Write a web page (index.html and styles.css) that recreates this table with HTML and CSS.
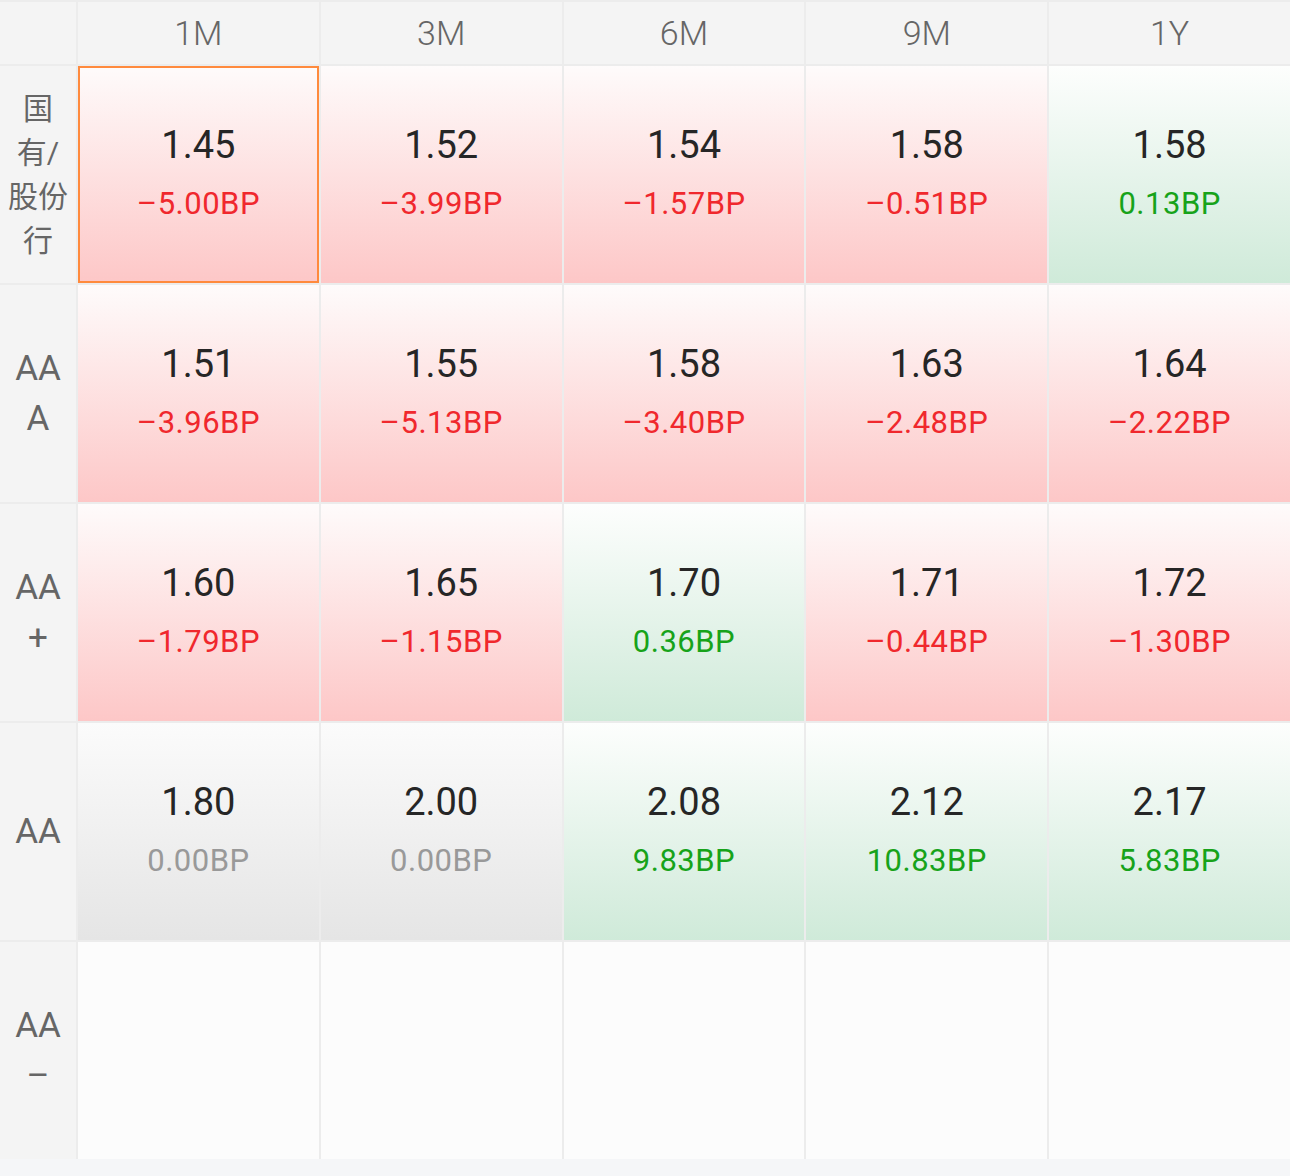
FILE: index.html
```html
<!DOCTYPE html>
<html lang="zh-CN">
<head>
    <meta charset="UTF-8">
    <meta name="viewport" content="width=device-width, initial-scale=1.0">
    <title>同业存单收益率</title>
    <link rel="stylesheet" href="styles.css">
</head>
<body>

    <section class="rate-grid">
        <!-- header row -->
        <div class="corner"></div>
        <div class="col-head">1M</div>
        <div class="col-head">3M</div>
        <div class="col-head">6M</div>
        <div class="col-head">9M</div>
        <div class="col-head">1Y</div>

        <!-- 国有/股份行 -->
        <div class="row-head cn">国<br>有/<br>股份<br>行</div>
        <div class="cell down selected"><span class="value">1.45</span><span class="change">–5.00BP</span></div>
        <div class="cell down"><span class="value">1.52</span><span class="change">–3.99BP</span></div>
        <div class="cell down"><span class="value">1.54</span><span class="change">–1.57BP</span></div>
        <div class="cell down"><span class="value">1.58</span><span class="change">–0.51BP</span></div>
        <div class="cell up"><span class="value">1.58</span><span class="change">0.13BP</span></div>

        <!-- AAA -->
        <div class="row-head">AA<br>A</div>
        <div class="cell down"><span class="value">1.51</span><span class="change">–3.96BP</span></div>
        <div class="cell down"><span class="value">1.55</span><span class="change">–5.13BP</span></div>
        <div class="cell down"><span class="value">1.58</span><span class="change">–3.40BP</span></div>
        <div class="cell down"><span class="value">1.63</span><span class="change">–2.48BP</span></div>
        <div class="cell down"><span class="value">1.64</span><span class="change">–2.22BP</span></div>

        <!-- AA+ -->
        <div class="row-head">AA<br>+</div>
        <div class="cell down"><span class="value">1.60</span><span class="change">–1.79BP</span></div>
        <div class="cell down"><span class="value">1.65</span><span class="change">–1.15BP</span></div>
        <div class="cell up"><span class="value">1.70</span><span class="change">0.36BP</span></div>
        <div class="cell down"><span class="value">1.71</span><span class="change">–0.44BP</span></div>
        <div class="cell down"><span class="value">1.72</span><span class="change">–1.30BP</span></div>

        <!-- AA -->
        <div class="row-head">AA</div>
        <div class="cell flat"><span class="value">1.80</span><span class="change">0.00BP</span></div>
        <div class="cell flat"><span class="value">2.00</span><span class="change">0.00BP</span></div>
        <div class="cell up"><span class="value">2.08</span><span class="change">9.83BP</span></div>
        <div class="cell up"><span class="value">2.12</span><span class="change">10.83BP</span></div>
        <div class="cell up"><span class="value">2.17</span><span class="change">5.83BP</span></div>

        <!-- AA- (no data) -->
        <div class="row-head">AA<br>–</div>
        <div class="cell empty"></div>
        <div class="cell empty"></div>
        <div class="cell empty"></div>
        <div class="cell empty"></div>
        <div class="cell empty"></div>
    </section>

</body>
</html>
```

FILE: styles.css
```css
/* General */
body {
    margin: 0;
    padding: 0;
    background: #f5f6f8;
    font-family: Roboto, "Noto Sans CJK SC", sans-serif;
    color: #333;
}

/* Grid */
.rate-grid {
    display: grid;
    grid-template-columns: 76px repeat(5, 1fr);
    grid-template-rows: 62px repeat(5, 217px);
    gap: 2px;
    padding-top: 2px;
    background: #ececec;
}

.corner,
.col-head,
.row-head {
    background: #f4f4f4;
    color: #666;
}

.col-head {
    display: flex;
    align-items: center;
    justify-content: center;
    font-size: 34px;
    font-weight: 300;
}

.row-head {
    display: flex;
    align-items: center;
    justify-content: center;
    text-align: center;
    font-size: 35px;
    line-height: 50px;
}

.row-head.cn {
    font-size: 30px;
    line-height: 44px;
}

/* Cells */
.cell {
    display: flex;
    flex-direction: column;
    align-items: center;
    justify-content: center;
    gap: 11px;
}

.cell .value {
    font-size: 38px;
    font-weight: 400;
    line-height: 48px;
    color: #262626;
}

.cell .change {
    font-size: 31px;
    font-weight: 400;
    line-height: 48px;
    letter-spacing: 0.5px;
}

.cell.down {
    background: linear-gradient(180deg, #fefbfb 0%, #fdc7c7 100%);
}

.cell.down .change {
    color: #f0282d;
}

.cell.up {
    background: linear-gradient(180deg, #fdfefd 0%, #cfead9 100%);
}

.cell.up .change {
    color: #17a31a;
}

.cell.flat {
    background: linear-gradient(180deg, #fbfbfb 0%, #e5e5e5 100%);
}

.cell.flat .change {
    color: #999;
}

.cell.empty {
    background: #fcfcfc;
}

.cell.selected {
    box-shadow: inset 0 0 0 2px #ff8a3d;
}
```
